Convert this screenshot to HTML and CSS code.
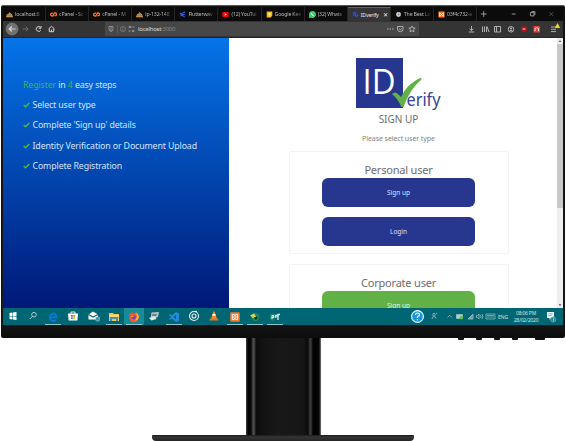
FILE: index.html
```html
<!DOCTYPE html>
<html lang="en">
<head>
<meta charset="utf-8">
<title>IDverify</title>
<link rel="stylesheet" href="styles.css">
</head>
<body>
<div class="monitor">
  <div class="screen">
    <div class="tabs">
      <div class="tab"><svg class="fav" viewBox="0 0 8 8"><path d="M0 7l1-3 2-1 1-2 2 2 1 1 1 3z" fill="#e8a23c"/><path d="M1 5.500h6M3 3.500h3" stroke="#5b6b96"/></svg><span>localhost:8</span></div>
      <div class="tab"><svg class="fav" viewBox="0 0 8 8"><path d="M3.500 2.500H2.300a1.600 1.600 0 0 0 0 3.200h1L5 2.300h1a1.500 1.500 0 0 1 0 3H5" fill="none" stroke="#ff6c2c" stroke-width="1.500"/></svg><span>cPanel - Sc</span></div>
      <div class="tab"><svg class="fav" viewBox="0 0 8 8"><path d="M3.500 2.500H2.300a1.600 1.600 0 0 0 0 3.200h1L5 2.300h1a1.500 1.500 0 0 1 0 3H5" fill="none" stroke="#ff6c2c" stroke-width="1.500"/></svg><span>cPanel - M</span></div>
      <div class="tab"><svg class="fav" viewBox="0 0 8 8"><path d="M0 7l1-3 2-1 1-2 2 2 1 1 1 3z" fill="#e8a23c"/><path d="M1 5.500h6M3 3.500h3" stroke="#5b6b96"/></svg><span>ip-132-148</span></div>
      <div class="tab"><svg class="fav" viewBox="0 0 8 8"><path d="M7 1L2 3.500 6.500 7M1 2l2 2-1 2M3 4h4" fill="none" stroke="#3557c9" stroke-width="1.300"/></svg><span>Flutterwav</span></div>
      <div class="tab"><svg class="fav" viewBox="0 0 8 8"><rect y="1.200" x=".3" width="7.400" height="5.600" rx="1.400" fill="#f00"/><path d="M3.200 2.700v2.600L5.400 4z" fill="#fff"/></svg><span>(12) YouTul</span></div>
      <div class="tab"><svg class="fav" viewBox="0 0 8 8"><path d="M.8.500h6.400v5L5.300 7.500H.8z" fill="#fdb913"/><circle cx="4" cy="3.500" r="1.300" fill="#fff"/><path d="M3.300 5.600h1.400" stroke="#fff"/></svg><span>Google Kee</span></div>
      <div class="tab"><svg class="fav" viewBox="0 0 8 8"><path d="M.2 7.800l.6-2A3.700 3.700 0 1 1 2.300 7.200z" fill="#35d168" stroke="#d8ffe5" stroke-width=".4"/><path d="M2.700 2.500q.2 2.400 2.700 3" fill="none" stroke="#fff" stroke-width="1.100"/></svg><span>(32) Whats</span></div>
      <div class="tab active"><svg class="fav" viewBox="0 0 8 8"><path d="M1 1h4v5H1z" fill="#3146b4"/><path d="M4 5l1.300 1.500L7 4" stroke="#4670c0" fill="none"/></svg><span>IDverify</span><b class="close">✕</b></div>
      <div class="tab"><svg class="fav" viewBox="0 0 8 8"><circle cx="4" cy="4" r="2.800" fill="#ddd"/><path d="M1.500 4h5M4 1.200v5" stroke="#777" stroke-width=".6"/></svg><span>The Best Lo</span></div>
      <div class="tab"><svg class="fav" viewBox="0 0 8 8"><path d="M.5.500h7v7h-7z" fill="#fb7a24"/><path d="M2 2.200l4 3.600M6 2.200L2 5.800M1.800 2v4M6.200 2v4" stroke="#fff" stroke-width=".9"/></svg><span>03f4c732-e</span></div>
      <svg class="window-controls" viewBox="0 0 87 14" fill="none" stroke="#bbb"><path d="M4 7h6M7 4v6M36 7h4M55.500 5.500h3.500v3.500h-3.500zM56.500 4.500h3.500v3.500" stroke-width=".8"/><path d="M75 5l4 4M79 5l-4 4" stroke="#777" stroke-width=".6"/></svg>
    </div>
    <div class="toolbar">
      <svg class="nav-buttons" viewBox="0 0 103 17" fill="none" stroke="#d5d5d5" stroke-width="1.200">
        <circle cx="9" cy="8" r="6" fill="#707070" stroke="#858585" stroke-width=".6"/><path d="M12.500 8h-6M8.800 5.500L6.200 8l2.600 2.500"/>
        <path d="M19.500 8h5.500M22.700 5.600L25.200 8l-2.500 2.400" stroke="#737373" stroke-width=".9"/>
        <path d="M37.500 6.400A2.400 2.400 0 1 0 37.800 9M38 5v2.200h-2.300" stroke-width="1"/>
        <path d="M45.500 8l3-2.700 3 2.700M46.300 7.700v3h4.400v-3M48.500 8.600v2" stroke-width="1"/>
      </svg>
      <div class="address">
        <svg viewBox="0 0 32 14" fill="none" stroke="#aaa" stroke-width=".7"><path d="M4 4.500h4v2.500q0 2-2 2.600Q4 9 4 7z M6 5v4"/><path d="M12.500 3v8" stroke="#666"/><circle cx="18" cy="7" r="2.500" stroke="#888"/><path d="M18 6.500v2M18 5v.6" stroke="#888"/><path d="M23.500 5h3M23.500 9h2M27 9h2.500M27.500 5h2M25 3.800v2.400M28 7.800v2.400" stroke="#bbb"/></svg>
        <span>localhost<i>:3000</i></span>
        <svg class="page-actions" viewBox="0 0 34 14" fill="none" stroke="#b5b5b5" stroke-width=".9"><path d="M2 7h1.500M4.500 7H6M7 7h1.500" stroke-width="1.200"/><path d="M12.500 4.500h5.500V7q0 2.700-2.700 2.700T12.500 7zM13.900 6.500l1.400 1.300 1.400-1.300"/><path d="M27 4l1 2 2.200.2-1.700 1.500.5 2.200-2-1.200-2 1.200.5-2.200-1.700-1.500L26 6z"/></svg>
      </div>
      <svg class="extensions" viewBox="0 0 100 17" fill="none" stroke="#bdbdbd" stroke-width=".9">
        <path d="M9.500 5v4.500M7.500 7.700l2 2 2-2M6.800 11h5.400"/>
        <path d="M20.500 5.500V11M22.500 5.500V11M24.500 5.500V11M25 5.500l2 5.500"/>
        <path d="M32.500 5.500h6V11h-6zM34.500 5.500V11"/>
        <circle cx="49" cy="8.300" r="2.800"/><circle cx="49" cy="7.500" r="1" fill="#bbb" stroke="none"/><path d="M47.400 10q1.600-1.500 3.200 0"/>
        <path d="M60 5.300h4l1 1v3.500l-3 1.700-3-1.700V6.300z" fill="#a31421" stroke="none"/><path d="M60.500 8h3" stroke="#fff"/>
        <rect x="71.500" y="5" width="6.500" height="6.500" rx=".6" fill="#e93d35" stroke="none"/><path d="M73 10V7.500q1.700-1.700 3.500 0V10" stroke="#fff"/>
        <path d="M89 6h5M89 8.300h5M89 10.600h5"/><path d="M95.500 2l2.700 5h-5.400z" fill="#eadb16" stroke="none"/>
      </svg>
    </div>
    <main class="viewport">
      <aside class="steps">
        <p><em>Register</em> in <em>4</em> easy steps</p>
        <ul>
          <li><svg viewBox="0 0 7 6"><path d="M.7 3l1.800 1.700L6.300 1"/></svg><span>Select user type</span></li>
          <li><svg viewBox="0 0 7 6"><path d="M.7 3l1.800 1.700L6.300 1"/></svg><span>Complete 'Sign up' details</span></li>
          <li><svg viewBox="0 0 7 6"><path d="M.7 3l1.800 1.700L6.300 1"/></svg><span>Identity Verification or Document Upload</span></li>
          <li><svg viewBox="0 0 7 6"><path d="M.7 3l1.800 1.700L6.300 1"/></svg><span>Complete Registration</span></li>
        </ul>
      </aside>
      <section class="signup">
        <svg class="logo" viewBox="0 0 86 54"><rect width="47" height="50" fill="#27378f"/><text x="6.500" y="36" class="logo-id" textLength="33" lengthAdjust="spacingAndGlyphs">ID</text><path d="M36 36q3-3 6 0l3 3Q51 26 64 20q3 0 .5 2.500Q54 31 47.500 49h-2Q42 41 36 36z" fill="#61b146"/><text x="50.500" y="48" class="logo-name" textLength="34" lengthAdjust="spacingAndGlyphs">erify</text></svg>
        <h1>SIGN UP</h1>
        <p class="hint">Please select user type</p>
        <div class="card"><h2>Personal user</h2><a class="button">Sign up</a><a class="button">Login</a></div>
        <div class="card"><h2>Corporate user</h2><a class="button green">Sign up</a></div>
      </section>
      <div class="scrollbar"><svg viewBox="0 0 6 6"><path d="M1.500 4L3 2.200 4.500 4z"/></svg><div class="thumb"></div><svg class="down" viewBox="0 0 6 6"><path d="M1.500 2.200L3 4l1.500-1.800z"/></svg></div>
    </main>
    <footer class="taskbar">
      <div class="apps">
        <div><svg viewBox="0 0 12 12"><path d="M2.500 3l3-.4V6h-3zM6 2.500l3.500-.5v4H6zM2.500 6.400h3v3l-3-.4zM6 6.400h3.500V10L6 9.500z" fill="#fff"/></svg></div>
        <div><svg viewBox="0 0 12 12"><g fill="none" stroke="#a8cbd0"><circle cx="7" cy="4.700" r="2.300"/><path d="M5.300 6.500L2.800 9"/></g></svg></div>
        <div class="open"><svg viewBox="0 0 12 12"><path d="M9 9Q6 11 3.800 8.600 2 5.500 4.500 3.400 7 1.500 9 4l.4 2.400H3.500" fill="none" stroke="#0878dc" stroke-width="1.900"/></svg></div>
        <div><svg viewBox="0 0 12 12"><path d="M4 4V2h4v2" fill="none" stroke="#eee"/><path d="M1 3.500h10l-.6 7H1.600z" fill="#fff"/><path d="M4 5h1.800v1.800H4z" fill="#e84b34"/><path d="M6.200 5H8v1.800H6.200z" fill="#6eb72b"/><path d="M4 7.200h1.800V9H4z" fill="#2196df"/><path d="M6.200 7.200H8V9H6.200z" fill="#f4b91d"/></svg></div>
        <div><svg viewBox="0 0 12 12"><path d="M.5 4.500L5 1.500l5 3v5H.5z" fill="#fff"/><path d="M.5 4.500L5 7l5-2.500" fill="none" stroke="#07646f" stroke-width="1.200"/><circle cx="9.700" cy="9" r="2.300" fill="#4698a8" stroke="#a8d2d8" stroke-width=".5"/></svg></div>
        <div class="open"><svg viewBox="0 0 12 12"><path d="M1 2h4l1 1h5v7H1z" fill="#f4c34d"/><path d="M2 6h8v4H8V8H4v2H2z" fill="#4b8cb8"/><path d="M1 4h10v1.500H1z" fill="#ffe08a"/></svg></div>
        <div class="open current"><svg viewBox="0 0 12 12"><path d="M2 2l1 1.200L4.500 1l1 2L8 1.300Q11 3.500 10.800 6.500A4.800 4.800 0 0 1 1.200 6.500z" fill="#ff5531"/><path d="M8 1.300Q11 3.500 10.800 6.500 9.500 10 7 9.500 10 6 8 1.300z" fill="#ffc22c"/><circle cx="5.800" cy="6.300" r="2.100" fill="#7945bd"/><path d="M3 5l3-.5-1 1.500H4z" fill="#ffae37"/></svg></div>
        <div><svg viewBox="0 0 12 12"><path d="M3.500 2.500l7.500-.5-1 5-7.500 2z" fill="#b6c3c8"/><path d="M4.500 4h4.500L8 6H4z" fill="#647c84"/><path d="M1 8l6-2 1.500 3-5 1.500z" fill="#dfe5e6"/></svg></div>
        <div class="open"><svg viewBox="0 0 12 12"><path d="M8 1l3 1.300v7.400L8 11 3.800 7.400 2 8.800 1 8l2-2-2-2 1-.8 1.800 1.400zM8 4L5.600 6 8 8z" fill="#2589d8" fill-rule="evenodd"/></svg></div>
        <div><svg viewBox="0 0 12 12"><g fill="none" stroke="#e9f1f2" stroke-width="1.100"><circle cx="6" cy="6" r="4.500"/><circle cx="6" cy="6" r="2"/><path d="M6 1.500h3"/></g></svg></div>
        <div><svg viewBox="0 0 12 12"><path d="M5.300 1.500h1.400L9 9H3z" fill="#f58a20"/><path d="M4.700 4h2.600l.5 1.700H4.200z" fill="#fff"/><path d="M2 8.500h8l.6 2H1.400z" fill="#e67418"/></svg></div>
        <div class="open"><svg viewBox="0 0 12 12"><rect x="1.200" y="1.200" width="9.600" height="9.600" rx="1.200" fill="#f17a32"/><path d="M3.300 3.500h2L6 5l.7-1.500h2v5h-2L6 7l-.7 1.500h-2zM3.500 6h5" fill="none" stroke="#fff" stroke-width=".9"/></svg></div>
        <div class="open"><svg viewBox="0 0 12 12"><circle cx="6.300" cy="6" r="4" fill="#238a44"/><path d="M1 4.500l4-2 2 3-3 1.500z" fill="#d8d65c"/><path d="M7 3l4 1-2 2z" fill="#2472bb"/><path d="M5 6.500l4-1-2 3.500z" fill="#112d20"/></svg></div>
        <div class="open"><svg viewBox="0 0 12 12"><path d="M1 3l4.500-1v8L1 9z" fill="#14826d"/><path d="M3 8V4.500h1.800v2H3" fill="none" stroke="#fff"/><path d="M9 9V3.500h2M6.800 7V4.500h2" fill="none" stroke="#d8e9e5" stroke-width="1.400"/></svg></div>
      </div>
      <svg class="tray" viewBox="0 0 86 17" fill="none" stroke="#9ac0c4" stroke-width=".8">
        <circle cx="7.500" cy="8.500" r="5.900" fill="#1595dd" stroke="#fff" stroke-width="1.100"/><path d="M5.500 7q.1-2 2-2t2 1.700Q9.500 8 7.500 8.500V10M7.500 11v1.200" stroke="#fff" stroke-width="1.200"/>
        <circle cx="24" cy="6.700" r="1.300"/><path d="M22 11q0-2.500 2-2.500t2 2M26 5l1.500.8"/>
        <path d="M37.500 9.500L39.700 7.300l2.200 2.200"/>
        <path d="M46.500 6.500h6v4h-6z" fill="#a8d2cf"/><circle cx="51.500" cy="9.700" r="1.800" fill="#57bc48" stroke="none"/>
        <path d="M58 11l5-5v5zM61 11V8" fill="#55979c"/>
        <path d="M66.500 7.500h1L69 6v5l-1.500-1.500h-1zM70.500 7q1 1.500 0 3M72 6q1.700 2.500 0 5"/>
        <path d="M76 6h9v5h-9zM77 7.500h7M77 9h7" stroke-width=".7"/>
      </svg>
      <span class="lang">ENG</span>
      <div class="clock"><span>08:06 PM</span><span>28/02/2020</span></div>
      <svg class="notice" viewBox="0 0 16 17"><path d="M3 4h7v6H7l-1.500 2v-2H3z" fill="#e6f0f0"/><path d="M4.500 5.800h4M4.500 7.500h3" stroke="#548e96" stroke-width=".6"/><circle cx="9.300" cy="11.500" r="2.600" fill="#2c8290" stroke="#7db5bd" stroke-width=".6"/><path d="M9.500 10v3" stroke="#d8eaec" stroke-width=".6"/></svg>
    </footer>
  </div>
</div>
<div class="controls"><i></i><i></i><i></i><i></i><i class="power"></i></div>
<div class="neck"></div>
<div class="base"></div>
</body>
</html>
```
FILE: styles.css
```css
* { box-sizing: border-box; margin: 0; padding: 0; }
body { width: 566px; height: 441px; overflow: hidden; background: #fff; padding-top: 5px; font-family: "Noto Sans", "Open Sans", sans-serif; }
svg { display: block; flex: none; }
.monitor { height: 333px; margin: 0 1px; padding: 2px 3px 0 2px; background: linear-gradient(#111 0, #161616 96%, #0c0c0c); border-radius: 2px; border-top: 1px solid #555; }
.screen { width: 560px; height: 318px; margin-top: -1px; overflow: hidden; }
.tabs { display: flex; height: 14px; background: #0b0b0b; }
.tab { display: flex; flex: none; align-items: center; width: 43.1px; padding: 0 1px 0 4px; border-right: 1px solid #252525; color: #bbb; font-size: 5.2px; }
.tab:first-child { padding-left: 3px; }
.tab span { width: 29px; margin-left: 2px; white-space: nowrap; letter-spacing: -.15px; -webkit-mask-image: linear-gradient(90deg, #000 65%, transparent); mask-image: linear-gradient(90deg, #000 65%, transparent); }
.tab.active { background: #353538; border-top: 1px solid #0a78d6; color: #eee; }
.tab.active span { width: 19px; -webkit-mask-image: none; mask-image: none; }
.fav { width: 7px; height: 7px; }
.close { margin-left: 3px; font-size: 6px; font-weight: 400; }
.window-controls { width: 84px; height: 14px; }
.toolbar { display: flex; height: 17px; background: #343434; border-bottom: 1px solid #252525; }
.nav-buttons { width: 103px; height: 17px; margin-right: -1px; }
.address { display: flex; align-items: center; width: 314px; height: 14px; margin-top: 1px; background: #474747; color: #ddd; font-size: 6px; }
.address > svg { width: 32px; height: 14px; }
.address span { margin-left: 1px; letter-spacing: -.25px; }
.address i { color: #888; font-style: normal; }
.address .page-actions { width: 34px; margin-left: auto; }
.extensions { width: 100px; height: 17px; margin-left: 43px; }
.viewport { display: flex; height: 270px; overflow: hidden; background: #fff; }
.steps { width: 226px; padding: 40px 0 0 20px; background: linear-gradient(#0574e8, #001878); color: #d4e4fa; font-size: 8.8px; letter-spacing: -.13px; line-height: 14px; white-space: nowrap; }
.steps em { color: #32bd52; font-style: normal; }
.steps ul { display: grid; gap: 6.2px; margin-top: 6.2px; list-style: none; }
.steps li { display: flex; align-items: center; gap: 2.5px; }
.steps li svg { width: 7px; height: 6px; fill: none; stroke: #50b83c; stroke-width: 1.4; }
.signup { flex: 1; display: flex; flex-direction: column; align-items: center; padding: 19.500px 0 0 11px; color: #6c6c6c; }
.logo { width: 86px; height: 54px; margin-left: 0; }
.logo-id { fill: #fff; font-size: 34px; font-family: "Open Sans", sans-serif; }
.logo-name { fill: #354395; font-size: 18px; }
h1 { margin-top: 0; font-size: 10px; line-height: 14px; font-weight: 400; }
.hint { margin-top: 7px; font-size: 7px; letter-spacing: -.07px; line-height: 11px; color: #848484; }
.card { display: flex; flex: none; flex-direction: column; align-items: center; width: 220px; height: 103px; margin-top: 7px; padding-top: 10px; border: 1px solid #f3f3f3; border-radius: 2px; }
.card + .card { margin-top: 10px; }
h2 { font-size: 11px; letter-spacing: -.2px; font-weight: 400; line-height: 16px; }
.button { display: flex; flex: none; align-items: center; justify-content: center; width: 153px; height: 29px; margin-bottom: 10px; border-radius: 6px; background: #27378f; color: #dce0fa; font-size: 6.500px; }
.button.green { background: #61b146; color: #e2f4db; }
.scrollbar { display: flex; flex-direction: column; width: 6px; height: 270px; background: #eee; }
.scrollbar svg { width: 6px; height: 6px; fill: #555; }
.thumb { height: 164px; background: #c9c9c9; }
.scrollbar .down { margin-top: auto; }
.taskbar { display: flex; align-items: center; height: 17px; background: #006673; color: #d0e4e6; }
.apps { display: flex; width: 407px; height: 17px; }
.apps div { display: flex; flex: none; justify-content: center; align-items: center; width: 20.15px; padding-bottom: 1px; }
.apps svg { width: 12px; height: 12px; }
.apps .open { padding-bottom: 0; background: linear-gradient(#8bc4cb, #8bc4cb) center bottom / 16px 1px no-repeat; }
.apps .current { background-color: #168b99; }
.tray { width: 86px; height: 17px; }
.lang { width: 14px; text-align: center; font-size: 5px; }
.clock { display: flex; flex-direction: column; width: 32px; text-align: center; font-size: 5px; line-height: 7px; letter-spacing: -.2px; }
.notice { width: 16px; height: 17px; margin-left: 2px; }
.controls { display: flex; gap: 12px; height: 2px; margin-left: 458px; }
.controls i { width: 6px; height: 2px; background: #111; border-radius: 0 0 1px 1px; }
.controls .power { width: 10px; margin-left: 5px; }
.neck { width: 75px; height: 97px; margin: -2px 0 0 246px; background: linear-gradient(90deg, #444 0, #030303 2px, #080808 5px, #464646 7px, #505050 8px, #0c0c0c 10px, #131313 18px, #181818 34px, #161616 57px, #0b0b0b 62px, #3c3c3c 64px, #383838 65px, #020202 67px, #050505 73px, #777 75px); }
.base { width: 262px; height: 6px; margin-left: 152px; background: linear-gradient(#1c1c1c, #353535 2px, #252525); border-radius: 1px 1px 4px 4px; }
```
